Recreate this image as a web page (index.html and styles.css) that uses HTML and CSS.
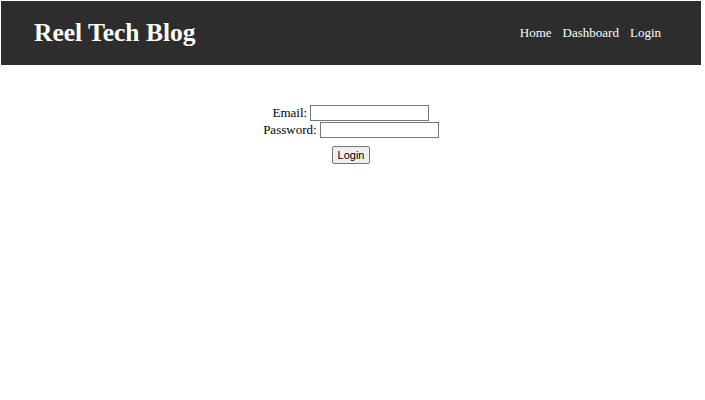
FILE: index.html
```html
<!DOCTYPE html>
<html>
<head>
<meta charset="utf-8">
<link rel="stylesheet" href="styles.css">
</head>
<body>
<header class="site-header">
  <h1 class="site-title">Reel Tech Blog</h1>
  <nav class="site-nav">
    <a href="#">Home</a>
    <a href="#">Dashboard</a>
    <a href="#">Login</a>
  </nav>
</header>
<main class="content">
  <form class="login-form">
    <label>Email: <input type="text" class="field"></label><br>
    <label>Password: <input type="password" class="field"></label><br>
    <button type="button" class="login-btn">Login</button>
  </form>
</main>
</body>
</html>
```
FILE: styles.css
```css
html, body {
  margin: 0;
  padding: 0;
  background: #fff;
}
body {
  font-family: "Liberation Serif", "Times New Roman", serif;
  font-size: 13px;
  color: #000;
  padding: 1px 4px 0 1px;
}
.site-header {
  background: #2d2d2d;
  height: 64px;
  display: flex;
  align-items: center;
  justify-content: space-between;
  padding: 0 40px 0 33px;
}
.site-title {
  margin: 0;
  color: #fff;
  font-size: 25.5px;
  font-weight: bold;
}
.site-nav {
  display: flex;
  gap: 11px;
}
.site-nav a {
  color: #fff;
  text-decoration: none;
  font-size: 13px;
}
.content {
  padding-top: 39px;
  text-align: center;
}
.login-form {
  line-height: 17px;
}
.field {
  width: 115px;
  height: 12px;
  border: 1px solid #767676;
  padding: 1px;
  font-size: 13px;
  vertical-align: baseline;
}
.login-btn {
  margin-top: 8px;
  font-family: "Liberation Sans", Arial, sans-serif;
  font-size: 11px;
  padding: 2px 5px;
  border: 1px solid #767676;
  background: #efefef;
  border-radius: 2px;
}
```
